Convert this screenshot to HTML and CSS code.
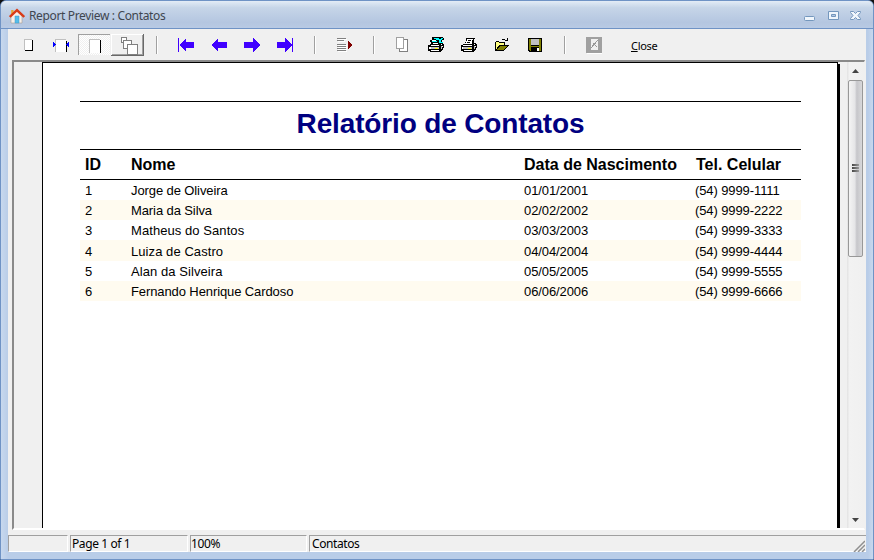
FILE: index.html
```html
<!DOCTYPE html>
<html lang="pt-BR">
<head>
<meta charset="utf-8">
<title>Report Preview : Contatos</title>
<link rel="stylesheet" href="styles.css">
</head>
<body>
<div class="window">
<header class="titlebar">
<svg class="home" width="16" height="16" viewBox="9 7 16 16"><path d="M11 15v7h11v-7l-5.5-5z" fill="#f6efe9" stroke="#a89b92" stroke-width=".6"/><path d="M11.2 9h2.3v4h-2.3z" fill="#e5a635"/><path d="M15 15h4v7h-4z" fill="#55bdea" stroke="#409bc6" stroke-width=".5"/><path d="M9.8 16L17 9.2l7.2 6.8" fill="none" stroke="#d93c18" stroke-width="2.4"/></svg>
<h1 class="caption">Report Preview : Contatos</h1>
<svg class="controls" width="60" height="16" viewBox="802 8 60 16" fill="#f0f6fc" stroke="#7497bd"><rect x="804.5" y="16.5" width="10" height="4" rx="1"/><path d="M828.5 11.500h10v8h-10z"/><path d="M831.5 14.500h4v2h-4z" fill="#b4c8e2"/><path d="M850.5 11.500h3l2 2 2-2h3v1l-2.500 3 2.500 3v1h-3l-2-2-2 2h-3v-1l2.500-3-2.500-3z"/></svg>
</header>
<main class="client">
<nav class="toolbar">
<svg class="tool" viewBox="12 29 33 31"><path fill="#000" d="M25 40h8v11h-8z"/><path fill="#c0c0c0" d="M24 39h8v11h-8z"/><path fill="#fff" d="M25 40h7v10h-7z"/></svg>
<svg class="tool" viewBox="45 29 33 31"><path fill="#c0c0c0" d="M55 39h11v13h-11z"/><path fill="#fff" d="M56 40h10v12h-10z"/><path d="M66 41h1v11h-1z"/><path fill="#00f" d="M53 42h1v5h-1zM54 43h1v3h-1zM55 44h1v1h-1zM68 42h1v5h-1zM67 43h1v3h-1zM66 44h1v1h-1z"/></svg>
<svg class="tool" viewBox="78 29 33 31"><defs><pattern id="dither" width="2" height="2" patternUnits="userSpaceOnUse"><path fill="#fff" d="M0 0h2v2h-2z"/><path fill="#f0f0f0" d="M0 0h1v1h-1zM1 1h1v1h-1z"/></pattern></defs><path fill="url(#dither)" d="M78 34h32v21h-32z"/><path fill="#a0a0a0" d="M78 34h32v1h-31v20h-1z"/><path fill="#c0c0c0" d="M89 39h11v14h-11z"/><path fill="#fff" d="M90 40h10v13h-10z"/><path d="M100 40h1v13h-1z"/></svg>
<svg class="tool" viewBox="111 29 33 31"><path fill="#696969" d="M111 34h33v22h-33z"/><path fill="#fff" d="M111 34h32v21h-32z"/><path fill="#a0a0a0" d="M112 35h31v20h-31z"/><path fill="#f0f0f0" d="M112 35h30v19h-30z"/><g fill="#fff" stroke="#808080"><path d="M121.500 37.500h5v5h-5z"/><path d="M123.500 40.500h8v8h-8z"/><path d="M127.500 44.500h10v10h-10z"/></g></svg>
<i class="sep"></i>
<svg class="tool arrow" viewBox="169 29 33 31"><path d="M178 38h1v14h-1zM179 45l7-7v4h8v6h-8v4z"/></svg>
<svg class="tool arrow" viewBox="202 29 33 31"><path d="M211 45l7-7v4h9v6h-9v4z"/></svg>
<svg class="tool arrow" viewBox="235 29 33 31"><path d="M260 45l-7-7v4h-9v6h9v4z"/></svg>
<svg class="tool arrow" viewBox="268 29 33 31"><path d="M292 45l-7-7v4h-8v6h8v4zM292 38h1v14h-1z"/></svg>
<i class="sep wide"></i>
<svg class="tool" viewBox="328 29 33 31"><path stroke="#fff" d="M338 39.500h9M338 41.500h7M338 45.500h9M338 47.500h9M338 49.500h9M338 51.500h9"/><path stroke="#808080" d="M337 38.500h9M337 40.500h7M337 44.500h9M337 46.500h9M337 48.500h9M337 50.500h9"/><path fill="#800000" d="M348 41l4 4-4 4z"/></svg>
<i class="sep late"></i>
<svg class="tool" viewBox="386 29 33 31"><path fill="#fff" stroke="#808080" d="M399.500 39.500h8v12h-8z"/><path fill="#fff" stroke="#a0a0a0" d="M396.500 37.500h7v11h-7z"/></svg>
<svg class="tool" viewBox="419 29 33 31"><path d="M432 37h11v1h1v2h-2v3h1v1h1v4h-1v2h-1v1h-1v1h-11v-1h-2v-6h2v-1h1v-2h-1v-2h2z"/><path fill="#0ff" d="M434 38h5v1h-5zM436 39h6v1h-6zM441 38h2v1h-2zM439 40h2v3h-2zM441 42h2v1h-2zM432 41h5v1h-5z"/><path fill="#fff" d="M432 40h4v1h-4zM433 43h5v1h-5zM431 45h8v1h-8zM429 47h2v2h-2zM431 50h8v1h-8zM441 44h1v1h-1zM442 46h1v1h-1z"/><path fill="#c0c0c0" d="M431 47h8v2h-8zM441 46h1v3h-1z"/><path fill="#ff0" d="M435 48h3v1h-3z"/></svg>
<svg class="tool" viewBox="452 29 33 31"><path d="M466 38h9v1h-1v4h2v1h1v4h-1v2h-1v1h-1v1h-11v-1h-2v-6h2v-1h2v-2h1z"/><path fill="#fff" d="M467 39h6v1h-1v4h-7v-1h1v-2h1zM463 45h9v1h-9zM462 47h1v2h-1zM464 50h8v1h-8zM474 44h1v1h-1zM475 46h1v1h-1z"/><path stroke="#000" d="M468 40.500h3M467 42.500h3"/><path fill="#c0c0c0" d="M463 47h9v2h-9zM474 46h1v3h-1z"/><path fill="#ff0" d="M468 48h3v1h-3z"/></svg>
<svg class="tool" viewBox="485 29 33 31"><path d="M496 41h3v1h6v3h4v1h-1v1h-1v1h-1v1h-1v1h-1v1h-9v-9h1zM502 39h3v1h-3zM505 40h2v1h-2zM507 38h1v3h-1z"/><path fill="#ffff80" d="M496 42h3v1h5v2h-5v1h-1v1h-1v2h-1z"/><path fill="#808000" d="M500 46h7v1h-1v1h-1v1h-1v1h-7v-1h1v-1h1v-1h1z"/></svg>
<svg class="tool" viewBox="518 29 33 31"><path d="M528 38h14v14h-13l-1-1z"/><path fill="#808000" d="M529 39h2v7h8v-7h2v12h-11l-1-1z"/><path fill="#c0c0c0" d="M531 39h8v6h-8z"/><path d="M531 47h8v4h-8z"/><path fill="#fff" d="M537 48h2v3h-2z"/></svg>
<i class="sep end"></i>
<svg class="tool" viewBox="577 29 33 31"><path fill="#fff" d="M587 38h15v16h-15z"/><path fill="#a0a0a0" d="M586 37h16v16h-16z"/><path fill="#f0f0f0" d="M591 39h7v11h-7z"/><path stroke="#999" d="M591 48l7-8M593 43l4 4"/></svg>
<button class="close"><u>C</u>lose</button>
</nav>
<section class="preview">
<article class="page">
<h2 class="report-title">Relatório de Contatos</h2>
<div class="row head"><span>ID</span><span>Nome</span><span>Data de Nascimento</span><span>Tel. Celular</span></div>
<div class="row"><span>1</span><span>Jorge de Oliveira</span><span>01/01/2001</span><span>(54) 9999-1111</span></div>
<div class="row alt"><span>2</span><span>Maria da Silva</span><span>02/02/2002</span><span>(54) 9999-2222</span></div>
<div class="row"><span>3</span><span class="loose">Matheus do Santos</span><span>03/03/2003</span><span>(54) 9999-3333</span></div>
<div class="row alt tall"><span>4</span><span class="loose">Luiza de Castro</span><span>04/04/2004</span><span>(54) 9999-4444</span></div>
<div class="row"><span>5</span><span class="loose">Alan da Silveira</span><span>05/05/2005</span><span>(54) 9999-5555</span></div>
<div class="row alt"><span>6</span><span>Fernando Henrique Cardoso</span><span>06/06/2006</span><span>(54) 9999-6666</span></div>
</article>
<div class="shadow"></div>
<div class="scrollbar">
<svg class="step" viewBox="0 0 17 18"><path d="M5 11l3.500-4 3.500 4z" fill="#444"/></svg>
<div class="thumb"><i></i><i></i><i></i></div>
<svg class="step bottom" viewBox="0 0 17 18"><path d="M5 8h7l-3.500 4z" fill="#444"/></svg>
</div>
</section>
<footer class="status"><span></span><span>Page 1 of 1</span><span>100%</span><span>Contatos</span><svg class="grip" width="12" height="12" viewBox="0 0 12 12"><path d="M1 12L12 1M5 12l7-7M9 12l3-3" stroke="#909090" stroke-width="1.500"/></svg></footer>
</main>
</div>
</body>
</html>
```
FILE: styles.css
```css
* { box-sizing: border-box; }
body { margin: 0; background: #111; font-family: "Noto Sans", sans-serif; }
.window { width: 874px; height: 560px; padding: 0 7px 7px; border: 1px solid #6f93c5; border-radius: 6px 6px 0 0; background: linear-gradient(90deg, #c7d8ee, #b9cde8 7px, #b9cde8 867px, #c7d8ee); overflow: hidden; }
.titlebar { display: flex; align-items: center; height: 28px; margin: 0 -7px; padding: 2px 11px 0 8px; background: linear-gradient(#e3ecf6, #c6d5e8 25%, #b4c6e0 80%, #b8cae4); border-bottom: 1px solid #6f93c5; }
.home { flex: none; }
.caption { margin: 0 auto 0 4px; font-size: 12px; font-weight: 400; color: #40464f; letter-spacing: -.35px; white-space: nowrap; }
.client { height: 523px; background: #f0f0f0; }
.toolbar { display: flex; height: 31px; padding-left: 4px; }
.tool { flex: none; width: 33px; height: 31px; shape-rendering: crispEdges; }
.arrow { fill: #4000ff; }
.sep { width: 2px; height: 18px; margin: 7px 11px 0 12px; background: linear-gradient(90deg, #a0a0a0 50%, #fff 50%); }
.sep.wide { margin: 7px 12px 0 13px; }
.sep.late { margin: 7px 11px 0 12px; }
.sep.end { margin: 7px 11px 0 13px; }
.close { margin: 0 0 0 21px; padding: 1px 0 0; border: 0; background: none; font: 11px "Noto Sans", sans-serif; letter-spacing: -.3px; }
.preview { display: flex; height: 470px; margin: 0 1px 0 4px; padding-left: 28px; border: solid; border-width: 2px 1px 2px 2px; border-color: #8a8a8a #f0f0f0 #fff #8a8a8a; background: #f0f0f0; }
.page { width: 796px; flex: none; border: 1px solid #000; border-width: 1px 1px 0; background: #fff; padding: 38px 36px 0 37px; font-family: "Liberation Sans", sans-serif; color: #000; }
.report-title { height: 49px; margin: 0; border: solid #000; border-width: 1px 0; font-size: 28px; line-height: 44px; letter-spacing: -.15px; text-align: center; color: #000080; white-space: nowrap; }
.row { display: grid; grid-template-columns: 46px 393px 171px 1fr; height: 20px; padding-left: 5px; font-size: 13px; line-height: 21px; letter-spacing: -.1px; white-space: nowrap; }
.row.head { height: 30px; font-size: 16px; font-weight: 700; line-height: 30px; letter-spacing: 0; border-bottom: 1px solid #000; }
.head span:last-child { padding-left: 1px; }
.alt { background: #fffbf0; }
.row.tall { height: 21px; line-height: 23px; }
.loose { letter-spacing: .07px; }
.shadow { flex: none; width: 2px; margin: 2px 7px 0 0; background: #000; }
.scrollbar { flex: none; display: flex; flex-direction: column; width: 17px; background: linear-gradient(90deg, #e2e2e2, #f2f2f2 15%, #f0f0f0); }
.step { width: 17px; height: 18px; flex: none; }
.step.bottom { margin-top: auto; }
.thumb { display: flex; flex-direction: column; align-items: center; justify-content: center; gap: 1px; width: 15px; height: 177px; margin-left: 1px; padding-bottom: 2px; border: 1px solid #989898; border-radius: 2px; background: linear-gradient(90deg, #f4f4f4, #e5e5e7 45%, #c6c6ca 60%, #d8d8da); }
.thumb i { width: 7px; height: 2px; background: linear-gradient(90deg, #444, #999); }
.status { display: flex; gap: 2px; height: 17px; margin-top: 5px; position: relative; }
.status span { width: 60px; height: 17px; padding-left: 2px; border: solid; border-width: 1px; border-color: #a0a0a0 #fff #fff #a0a0a0; font-size: 12px; line-height: 16px; letter-spacing: -.4px; white-space: nowrap; }
.status span:nth-child(2) { width: 118px; padding-left: 1px; }
.status span:nth-child(3) { width: 117px; padding-left: 0; }
.status span:nth-child(4) { flex: 1; border-right: 0; }
.grip { position: absolute; right: 1px; bottom: 0; }
```
